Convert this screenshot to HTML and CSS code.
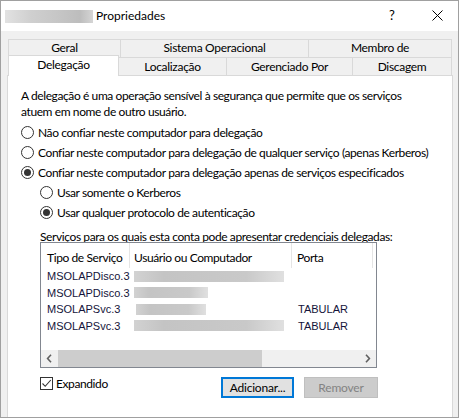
FILE: index.html
```html
<!DOCTYPE html>
<html lang="pt">
<head>
<meta charset="utf-8">
<title>Propriedades</title>
<link rel="stylesheet" href="styles.css">
</head>
<body>
<div class="window">
  <div class="titlebar">
    <span class="blur-title"></span>
    <span class="title">Propriedades</span>
    <span class="help">?</span>
    <span class="close"><svg width="11" height="11" viewBox="0 0 11 11"><path d="M0.5 0.5 L10.5 10.5 M10.5 0.5 L0.5 10.5" stroke="#000" stroke-width="1" fill="none"/></svg></span>
  </div>
  <div class="tabs">
    <div class="tabrow back">
      <div class="tab w-geral">Geral</div>
      <div class="tab w-sistema">Sistema Operacional</div>
      <div class="tab w-membro">Membro de</div>
    </div>
    <div class="tabrow front">
      <div class="tab selected w-deleg">Delegação</div>
      <div class="tab w-local">Localização</div>
      <div class="tab w-geren">Gerenciado Por</div>
      <div class="tab w-disc">Discagem</div>
    </div>
  </div>
  <div class="panel">
    <p class="desc">A delegação é uma operação sensível à segurança que permite que os serviços<br>atuem em nome de outro usuário.</p>
    <div class="options">
      <div class="radio-row"><span class="radio"></span><span>Não confiar neste computador para delegação</span></div>
      <div class="radio-row"><span class="radio"></span><span>Confiar neste computador para delegação de qualquer serviço (apenas Kerberos)</span></div>
      <div class="radio-row"><span class="radio checked"></span><span>Confiar neste computador para delegação apenas de serviços especificados</span></div>
      <div class="radio-row sub"><span class="radio"></span><span>Usar somente o Kerberos</span></div>
      <div class="radio-row sub"><span class="radio checked"></span><span>Usar qualquer protocolo de autenticação</span></div>
    </div>
    <div class="list-label">Serviços para os quais esta conta pode apresentar credenciais delegadas:</div>
    <div class="listbox">
      <div class="list-header">
        <div class="col c1">Tipo de Serviço</div>
        <div class="col c2">Usuário ou Computador</div>
        <div class="col c3">Porta</div>
      </div>
      <div class="list-row"><div class="cell c1">MSOLAPDisco.3</div><div class="cell c2"><span class="blur long"></span></div><div class="cell c3"></div></div>
      <div class="list-row"><div class="cell c1">MSOLAPDisco.3</div><div class="cell c2"><span class="blur short"></span></div><div class="cell c3"></div></div>
      <div class="list-row"><div class="cell c1">MSOLAPSvc.3</div><div class="cell c2"><span class="blur short2"></span></div><div class="cell c3">TABULAR</div></div>
      <div class="list-row"><div class="cell c1">MSOLAPSvc.3</div><div class="cell c2"><span class="blur long"></span></div><div class="cell c3">TABULAR</div></div>
      <div class="list-spacer"></div>
      <div class="hscroll">
        <div class="sbtn"><svg width="7" height="9" viewBox="0 0 7 9"><path d="M5 0.8 L1.6 4.5 L5 8.2" stroke="#606060" stroke-width="1.6" fill="none"/></svg></div>
        <div class="thumb"></div>
        <div class="track"></div>
        <div class="sbtn"><svg width="7" height="9" viewBox="0 0 7 9"><path d="M2 0.8 L5.4 4.5 L2 8.2" stroke="#606060" stroke-width="1.6" fill="none"/></svg></div>
      </div>
    </div>
    <div class="bottom-row">
      <label class="check-row"><span class="checkbox"><svg width="11" height="11" viewBox="0 0 11 11"><path d="M1.5 5.5 L4.2 8.3 L9.8 2" stroke="#333" stroke-width="1.1" fill="none"/></svg></span><span>Expandido</span></label>
      <button class="btn default">Adicionar...</button>
      <button class="btn disabled">Remover</button>
    </div>
  </div>
</div>
</body>
</html>
```
FILE: styles.css
```css
* { box-sizing: border-box; }
html, body { margin: 0; padding: 0; background: #fff; }
body { font-family: Lato, "Noto Sans", sans-serif; font-size: 12px; color: #000; }

.window {
  width: 459px; height: 418px;
  border: 1px solid #a0a0a0;
  background: #f0f0f0;
  display: flex; flex-direction: column;
  overflow: hidden;
}

.titlebar {
  height: 30px; background: #fff;
  display: flex; align-items: center;
  flex-shrink: 0;
}
.blur-title {
  margin-left: 4px; width: 88px; height: 13px;
  background: linear-gradient(to right, #e2e2e2, #cfcfcf 30%, #c6c6c6 60%, #bdbdbd 85%, #d5d5d5);
  filter: blur(0.6px);
}
.title { margin-left: 3px; line-height: 16px; margin-top: -1px; }
.help { margin-left: auto; width: 12px; text-align: center; font-size: 13px; margin-top: -2px; }
.close { margin-left: 34px; margin-right: 15px; width: 11px; height: 11px; display: flex; margin-top: -2px; }

.tabs { margin: 8px 0 0 7px; flex-shrink: 0; letter-spacing: -0.3px; }
.tabrow { display: flex; height: 18px; }
.tab {
  height: 18px; border: 1px solid #d9d9d9; border-bottom: 0;
  background: #f0f0f0;
  text-align: center; line-height: 16px;
  margin-left: -1px;
}
.tab:first-child { margin-left: 0; }
.tabrow.front .tab { line-height: 17px; }
.tab.selected {
  height: 21px; margin-top: -2px;
  background: #fff; position: relative; z-index: 2;
  line-height: 18px;
}
.w-geral { width: 113px; }
.w-sistema { width: 189px; }
.w-membro { width: 144px; }
.w-deleg { width: 111px; }
.w-local { width: 109px; }
.w-geren { width: 127px; }
.w-disc { width: 100px; }

.panel {
  flex: 1;
  margin: 0 5px 0 6px;
  background: #fff;
  border: 1px solid #d9d9d9; border-bottom: 0;
  padding: 12px 13px 0 13px;
  display: flex; flex-direction: column;
  letter-spacing: -0.4px;
}
.desc { margin: 0; line-height: 16px; }
.options { margin-top: 2px; display: flex; flex-direction: column; }
.radio-row { height: 20px; display: flex; align-items: center; gap: 4px; white-space: nowrap; }
.radio-row.sub { padding-left: 19px; }
.radio {
  width: 13px; height: 13px; border-radius: 50%;
  border: 1px solid #333; background: #fff;
  display: flex; align-items: center; justify-content: center;
  flex-shrink: 0;
}
.radio.checked::after {
  content: ""; width: 7px; height: 7px; border-radius: 50%; background: #333;
}

.list-label { margin: 9px 0 0 19px; height: 12px; line-height: 12px; white-space: nowrap; }
.listbox {
  margin: -1px 0 0 19px; width: 337px; height: 126px;
  border: 1px solid #828790; background: #fff;
  display: flex; flex-direction: column;
}
.list-header { display: flex; height: 25px; flex-shrink: 0; }
.col { line-height: 25px; padding-top: 2px; border-right: 1px solid #e5e5e5; white-space: nowrap; overflow: hidden; }
.list-header .c1 { width: 89px; padding-left: 6px; }
.list-header .c2 { width: 162px; padding-left: 4px; }
.list-header .c3 { width: 81px; padding-left: 5px; }
.list-row { display: flex; height: 16.5px; flex-shrink: 0; font-family: "Liberation Sans", Arial, sans-serif; font-size: 11px; color: #14143a; letter-spacing: 0; }
.list-row:first-of-type { margin-top: 2px; }
.cell { line-height: 16px; white-space: nowrap; }
.cell.c1 { width: 89px; padding-left: 6px; }
.cell.c2 { width: 162px; padding-left: 4px; display: flex; align-items: center; }
.cell.c3 { width: 81px; padding-left: 6px; }
.blur {
  height: 11px; display: block;
  background: linear-gradient(to right, #d2d2d2, #c4c4c4 20%, #c9c9c9 75%, #e0e0e0);
  filter: blur(0.5px);
}
.blur.long { width: 150px; }
.blur.short { width: 74px; }
.blur.short2 { width: 70px; margin-left: 2px; }
.list-spacer { flex: 1; }
.hscroll { height: 17px; display: flex; flex-shrink: 0; background: #f0f0f0; }
.sbtn { width: 17px; display: flex; align-items: center; justify-content: center; }
.thumb { width: 204px; background: #cdcdcd; }
.track { flex: 1; }

.bottom-row { margin: 9px 0 0 19px; width: 338px; display: flex; align-items: flex-start; }
.check-row { display: flex; align-items: center; gap: 3px; height: 13px; margin-top: 0; }
.checkbox {
  width: 13px; height: 13px; border: 1px solid #333; background: #fff;
  display: flex; align-items: center; justify-content: center;
}
.checkbox svg { display: block; }
.btn {
  font-family: inherit; font-size: 12px; height: 21px; padding: 0;
  line-height: 17px; letter-spacing: -0.2px;
}
.btn.default { margin-left: auto; width: 73px; border: 2px solid #0078d7; background: #e1e1e1; color: #000; }
.btn.disabled { margin-left: 10px; width: 74px; border: 1px solid #bfbfbf; background: #cccccc; color: #838383; }
```
